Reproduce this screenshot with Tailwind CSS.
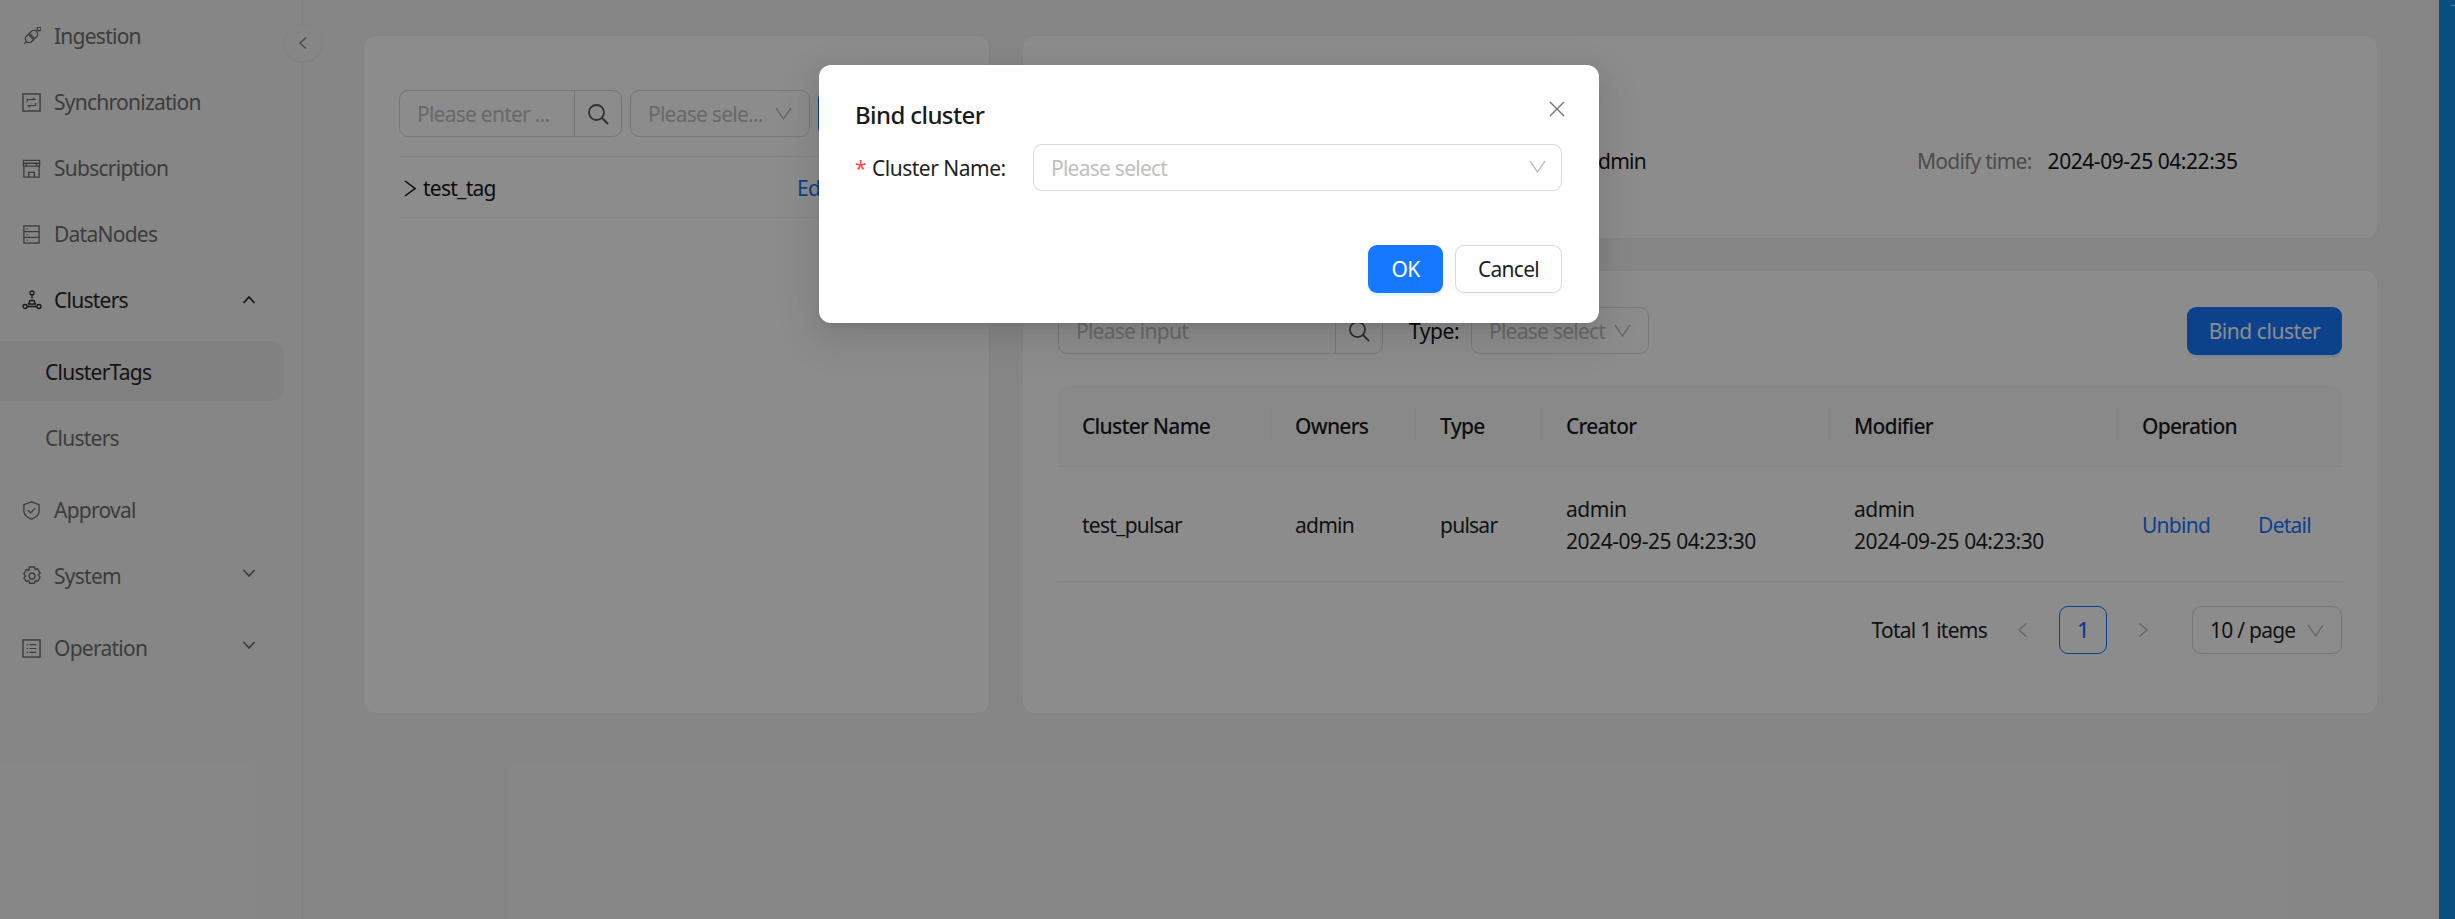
<!doctype html>
<html lang="en">
<head>
<meta charset="utf-8">
<title>Bind cluster</title>
<script src="https://cdn.jsdelivr.net/npm/@tailwindcss/browser@4"></script>
</head>
<body class="m-0 overflow-hidden">
<div class="relative flex w-[2455px] h-[919px] overflow-hidden bg-[#f5f5f5] text-[21px] leading-[32px] text-[#1f1f1f] font-['Noto_Sans','Open_Sans',sans-serif] tracking-[-0.75px]">

  <!-- Sidebar -->
  <aside class="relative w-[303px] shrink-0 border-r border-[#e8e8e8] pt-[6px] text-[#6e6e6e]">
    <div class="flex h-[60px] items-center pl-[22px] gap-[13px]">
      <svg class="w-[19px] h-[19px]" viewBox="0 0 20 20" fill="none" stroke="currentColor" stroke-width="1.400"><g transform="rotate(45 10 10)"><path d="M6 9.200V6.500a4 4 0 0 1 8 0v2.700zM6 10.800v2.700a4 4 0 0 0 8 0v-2.700zM10 2.500V.5M10 17.500V21"/><circle cx="10" cy="-1.500" r="2"/></g></svg>
      <span>Ingestion</span>
    </div>
    <div class="mt-[6px] flex h-[60px] items-center pl-[22px] gap-[13px]">
      <svg class="w-[19px] h-[19px]" viewBox="0 0 20 20" fill="none" stroke="currentColor" stroke-width="1.500"><rect x="1" y="1" width="18" height="18"/><path d="M5.500 9.500V6.800h8l-2-1.800M14.500 10.500v2.700h-8l2 1.800" stroke-width="1.200"/></svg>
      <span>Synchronization</span>
    </div>
    <div class="mt-[6px] flex h-[60px] items-center pl-[22px] gap-[13px]">
      <svg class="w-[19px] h-[19px]" viewBox="0 0 20 20" fill="none" stroke="currentColor" stroke-width="1.400"><path d="M1.500 1.500h17V7.500h-17zM2 7.500V19h16V7.500M1.500 4.500h17M7 19v-5h6v5M4 7.500l1-3M16 7.500l-1-3"/></svg>
      <span>Subscription</span>
    </div>
    <div class="mt-[6px] flex h-[60px] items-center pl-[22px] gap-[13px]">
      <svg class="w-[19px] h-[19px]" viewBox="0 0 20 20" fill="none" stroke="currentColor" stroke-width="1.400"><rect x="2" y="1" width="16" height="18"/><path d="M2 7h16M2 13h16"/><path d="M5 4h1M5 10h1M5 16h1" stroke-width="1.600"/></svg>
      <span>DataNodes</span>
    </div>
    <div class="mt-[6px] flex h-[60px] items-center justify-between pl-[22px] pr-[46px] text-[#262626]">
      <span class="flex items-center gap-[12px]">
        <svg class="w-[20px] h-[20px]" viewBox="0 0 20 20" fill="none" stroke="currentColor" stroke-width="1.300"><circle cx="10" cy="3" r="2"/><circle cx="3" cy="16.500" r="2"/><circle cx="17" cy="16.500" r="2"/><path d="M10 5v3.500M6.500 14l1.500-3.500h4l1.500 3.500zM5 16.500h10"/></svg>
        <span>Clusters</span>
      </span>
      <svg class="w-[14px] h-[10px]" viewBox="0 0 14 10" fill="none" stroke="currentColor" stroke-width="1.800"><path d="M1.500 8L7 2l5.500 6"/></svg>
    </div>
    <div class="mt-[11px] flex h-[60px] w-[284px] items-center rounded-r-[12px] bg-[#ebebeb] pl-[45px] pt-[2px] text-[#262626]">ClusterTags</div>
    <div class="mt-[7px] flex h-[60px] items-center pl-[45px]">Clusters</div>
    <div class="mt-[12px] flex h-[60px] items-center pl-[22px] gap-[13px]">
      <svg class="w-[19px] h-[19px]" viewBox="0 0 20 20" fill="none" stroke="currentColor" stroke-width="1.400"><path d="M10 1l8 2.800v7c0 4-4 6.800-8 8.200-4-1.400-8-4.200-8-8.200v-7z"/><path d="M6 9.500l3 3 5-5"/></svg>
      <span>Approval</span>
    </div>
    <div class="mt-[6px] flex h-[60px] items-center justify-between pl-[22px] pr-[46px]">
      <span class="flex items-center gap-[12px]">
        <svg class="w-[20px] h-[20px]" viewBox="0 0 20 20" fill="none" stroke="currentColor" stroke-width="1.400"><circle cx="10" cy="10" r="3"/><path d="M7.500 1h5l.7 2.600 2.500-.8 2.400 4.300-1.900 2 1.900 2-2.400 4.300-2.500-.8-.7 2.600h-5l-.7-2.600-2.500.8L1.900 12l1.900-2-1.900-2 2.400-4.300 2.500.8z"/></svg>
        <span>System</span>
      </span>
      <svg class="w-[14px] h-[10px] mt-[-6px]" viewBox="0 0 14 10" fill="none" stroke="currentColor" stroke-width="1.800"><path d="M1.500 2L7 8l5.500-6"/></svg>
    </div>
    <div class="mt-[12px] flex h-[60px] items-center justify-between pl-[22px] pr-[46px]">
      <span class="flex items-center gap-[13px]">
        <svg class="w-[19px] h-[19px]" viewBox="0 0 20 20" fill="none" stroke="currentColor" stroke-width="1.500"><rect x="1" y="1" width="18" height="18"/><path d="M8 6h7M8 10h7M8 14h7M5 6h1.500M5 10h1.500M5 14h1.500" stroke-width="1.300"/></svg>
        <span>Operation</span>
      </span>
      <svg class="w-[14px] h-[10px] mt-[-6px]" viewBox="0 0 14 10" fill="none" stroke="currentColor" stroke-width="1.800"><path d="M1.500 2L7 8l5.500-6"/></svg>
    </div>
    <button class="absolute left-[285px] top-[25px] flex h-[36px] w-[36px] items-center justify-center rounded-full bg-[#f5f5f5] shadow-[0_1px_4px_rgba(0,0,0,0.08)]">
      <svg class="w-[10px] h-[14px]" viewBox="0 0 10 14" fill="none" stroke="#8c8c8c" stroke-width="1.600"><path d="M8 1.500L2 7l6 5.500"/></svg>
    </button>
  </aside>

  <!-- Main -->
  <main class="flex w-[2136px] shrink-0 gap-[32px] pl-[60px] pt-[35px]">
    <!-- Tag list card -->
    <section class="h-[679px] w-[627px] shrink-0 rounded-[12px] border border-[#f0f0f0] bg-white pl-[35px] pr-[31px] pt-[54px]">
      <div class="flex h-[48px] gap-[8px]">
        <div class="flex h-[47px] w-[223px] items-center rounded-[9px] border border-[#d9d9d9]">
          <span class="w-[174px] shrink-0 pl-[17px] text-[#bfbfbf]">Please enter ...</span>
          <span class="flex h-[47px] flex-1 items-center justify-center border-l border-[#d9d9d9]">
            <svg class="w-[22px] h-[22px]" viewBox="0 0 22 22" fill="none" stroke="#595959" stroke-width="1.800"><circle cx="9.500" cy="9.500" r="7.500"/><path d="M15 15l6 6"/></svg>
          </span>
        </div>
        <div class="flex h-[47px] w-[180px] items-center justify-between rounded-[9px] border border-[#d9d9d9] pl-[17px] pr-[17px] text-[#bfbfbf]">
          <span>Please sele...</span>
          <svg class="w-[17px] h-[13px]" viewBox="0 0 17 13" fill="none" stroke="#bfbfbf" stroke-width="1.400"><path d="M1 1l7.500 11L16 1"/></svg>
        </div>
        <div class="h-[47px] w-[100px] rounded-[9px] bg-[#1677ff]"></div>
      </div>
      <div class="mt-[18px] flex h-[62px] items-center border-y border-[#f0f0f0] pl-[5px] pt-[2px]">
        <span class="flex w-[393px] items-center gap-[7px] text-[#141414]">
          <svg class="w-[12px] h-[17px]" viewBox="0 0 12 17" fill="none" stroke="#141414" stroke-width="1.500"><path d="M1 1l10 7.500L1 16"/></svg>
          test_tag
        </span>
        <span class="text-[#1677ff]">Edit</span>
      </div>
    </section>

    <div class="flex w-[1356px] shrink-0 flex-col gap-[31px]">
      <!-- Details card -->
      <section class="flex h-[204px] shrink-0 items-start rounded-[12px] border border-[#f0f0f0] bg-white pl-[564px] pt-[109px]">
        <span class="w-[330px] text-[#141414]">admin</span>
        <span class="text-[#8c8c8c]">Modify time:</span>
        <span class="ml-[16px] tracking-[-0.45px] text-[#141414]">2024-09-25 04:22:35</span>
      </section>

      <!-- Clusters table card -->
      <section class="h-[444px] rounded-[12px] border border-[#f0f0f0] bg-white px-[35px] pt-[36px]">
        <div class="flex h-[48px] items-start">
          <div class="flex h-[47px] w-[325px] items-center rounded-[9px] border border-[#d9d9d9]">
            <span class="w-[276px] shrink-0 pl-[17px] text-[#bfbfbf]">Please input</span>
            <span class="flex h-[47px] flex-1 items-center justify-center border-l border-[#d9d9d9]">
              <svg class="w-[22px] h-[22px]" viewBox="0 0 22 22" fill="none" stroke="#595959" stroke-width="1.800"><circle cx="9.500" cy="9.500" r="7.500"/><path d="M15 15l6 6"/></svg>
            </span>
          </div>
          <span class="ml-[26px] flex h-[47px] w-[62px] items-center tracking-[-0.45px] text-[#141414]">Type:</span>
          <div class="flex h-[47px] w-[178px] items-center justify-between rounded-[9px] border border-[#d9d9d9] pl-[17px] pr-[17px] text-[#bfbfbf]">
            <span>Please select</span>
            <svg class="w-[17px] h-[13px]" viewBox="0 0 17 13" fill="none" stroke="#bfbfbf" stroke-width="1.400"><path d="M1 1l7.500 11L16 1"/></svg>
          </div>
          <button class="ml-auto h-[48px] w-[155px] rounded-[9px] bg-[#1677ff] tracking-[-0.45px] text-white shadow-[0_3px_0_rgba(5,145,255,0.1)]">Bind cluster</button>
        </div>
        <div class="mt-[30px] grid grid-cols-[213px_145px_126px_288px_288px_224px]">
          <div class="relative flex h-[82px] items-center rounded-tl-[12px] border-b border-[#f0f0f0] bg-[#fafafa] pl-[24px] font-medium text-[#1a1a1a]">Cluster Name<i class="absolute right-0 top-[23px] h-[34px] w-px bg-[#f0f0f0]"></i></div>
          <div class="relative flex h-[82px] items-center border-b border-[#f0f0f0] bg-[#fafafa] pl-[24px] font-medium text-[#1a1a1a]">Owners<i class="absolute right-0 top-[23px] h-[34px] w-px bg-[#f0f0f0]"></i></div>
          <div class="relative flex h-[82px] items-center border-b border-[#f0f0f0] bg-[#fafafa] pl-[24px] font-medium text-[#1a1a1a]">Type<i class="absolute right-0 top-[23px] h-[34px] w-px bg-[#f0f0f0]"></i></div>
          <div class="relative flex h-[82px] items-center border-b border-[#f0f0f0] bg-[#fafafa] pl-[24px] font-medium text-[#1a1a1a]">Creator<i class="absolute right-0 top-[23px] h-[34px] w-px bg-[#f0f0f0]"></i></div>
          <div class="relative flex h-[82px] items-center border-b border-[#f0f0f0] bg-[#fafafa] pl-[24px] font-medium text-[#1a1a1a]">Modifier<i class="absolute right-0 top-[23px] h-[34px] w-px bg-[#f0f0f0]"></i></div>
          <div class="flex h-[82px] items-center rounded-tr-[12px] border-b border-[#f0f0f0] bg-[#fafafa] pl-[24px] font-medium text-[#1a1a1a]">Operation</div>

          <div class="flex h-[115px] items-center border-b border-[#f0f0f0] pl-[24px] pt-[2px] text-[#1f1f1f]">test_pulsar</div>
          <div class="flex h-[115px] items-center border-b border-[#f0f0f0] pl-[24px] pt-[2px] text-[#1f1f1f]">admin</div>
          <div class="flex h-[115px] items-center border-b border-[#f0f0f0] pl-[24px] pt-[2px] text-[#1f1f1f]">pulsar</div>
          <div class="flex h-[115px] flex-col justify-center border-b border-[#f0f0f0] pl-[24px] pt-[1px] tracking-[-0.45px] text-[#1f1f1f]"><span>admin</span><span>2024-09-25 04:23:30</span></div>
          <div class="flex h-[115px] flex-col justify-center border-b border-[#f0f0f0] pl-[24px] pt-[1px] tracking-[-0.45px] text-[#1f1f1f]"><span>admin</span><span>2024-09-25 04:23:30</span></div>
          <div class="flex h-[115px] items-center gap-[48px] border-b border-[#f0f0f0] pl-[24px] pt-[2px] text-[#1677ff]"><span>Unbind</span><span>Detail</span></div>
        </div>
        <div class="mt-[24px] flex h-[48px] items-center justify-end">
          <span class="text-[#1f1f1f]">Total 1 items</span>
          <svg class="ml-[30px] w-[11px] h-[16px]" viewBox="0 0 11 16" fill="none" stroke="#bfbfbf" stroke-width="1.500"><path d="M9.500 1.500L2 8l7.500 6.500"/></svg>
          <span class="ml-[31px] flex h-[48px] w-[48px] items-center justify-center rounded-[9px] border border-[#1677ff] font-medium text-[#1677ff]">1</span>
          <svg class="ml-[31px] w-[11px] h-[16px]" viewBox="0 0 11 16" fill="none" stroke="#bfbfbf" stroke-width="1.500"><path d="M1.500 1.500L9 8l-7.500 6.500"/></svg>
          <div class="ml-[43px] flex h-[48px] w-[150px] items-center justify-between rounded-[9px] border border-[#d9d9d9] pl-[17px] pr-[17px] text-[#1f1f1f]">
            <span>10 / page</span>
            <svg class="w-[17px] h-[13px]" viewBox="0 0 17 13" fill="none" stroke="#bfbfbf" stroke-width="1.400"><path d="M1 1l7.500 11L16 1"/></svg>
          </div>
        </div>
      </section>
    </div>
  </main>

  <!-- Right edge strip -->
  <div class="relative flex-1 bg-[#1292ec]">
    <i class="absolute left-[12px] top-[5px] h-[1px] w-[4px] bg-white/60"></i>
  </div>

  <!-- Mask -->
  <div class="absolute inset-0 bg-black/45"></div>

  <!-- Modal -->
  <div class="absolute left-[819px] top-[65px] h-[258px] w-[780px] rounded-[12px] bg-white pl-[36px] pr-[37px] shadow-[0_9px_24px_rgba(0,0,0,0.08),0_4px_9px_-6px_rgba(0,0,0,0.12),0_14px_42px_12px_rgba(0,0,0,0.05)]">
    <svg class="absolute right-[34px] top-[36px] w-[16px] h-[16px]" viewBox="0 0 16 16" fill="none" stroke="#727272" stroke-width="1.400"><path d="M1 1l14 14M15 1L1 15"/></svg>
    <h2 class="pt-[32px] text-[24px] leading-[36px] font-medium tracking-[-0.6px] text-[#1a1a1a]">Bind cluster</h2>
    <div class="mt-[11px] flex items-center">
      <span class="w-[17px] text-[#ff4d4f]">*</span>
      <span class="w-[161px] tracking-[-0.5px] text-[#1f1f1f]">Cluster Name:</span>
      <div class="flex h-[47px] flex-1 items-center justify-between rounded-[9px] border border-[#d9d9d9] pl-[17px] pr-[15px] text-[#bfbfbf]">
        <span>Please select</span>
        <svg class="w-[17px] h-[13px] mt-[-3px]" viewBox="0 0 17 13" fill="none" stroke="#bfbfbf" stroke-width="1.400"><path d="M1 1l7.500 11L16 1"/></svg>
      </div>
    </div>
    <div class="mt-[54px] flex justify-end gap-[12px]">
      <button class="h-[48px] w-[75px] rounded-[9px] bg-[#1677ff] text-white shadow-[0_3px_0_rgba(5,145,255,0.1)]">OK</button>
      <button class="h-[48px] w-[107px] rounded-[9px] border border-[#d9d9d9] bg-white text-[#1f1f1f] shadow-[0_3px_0_rgba(0,0,0,0.02)]">Cancel</button>
    </div>
  </div>
</div>
</body>
</html>
